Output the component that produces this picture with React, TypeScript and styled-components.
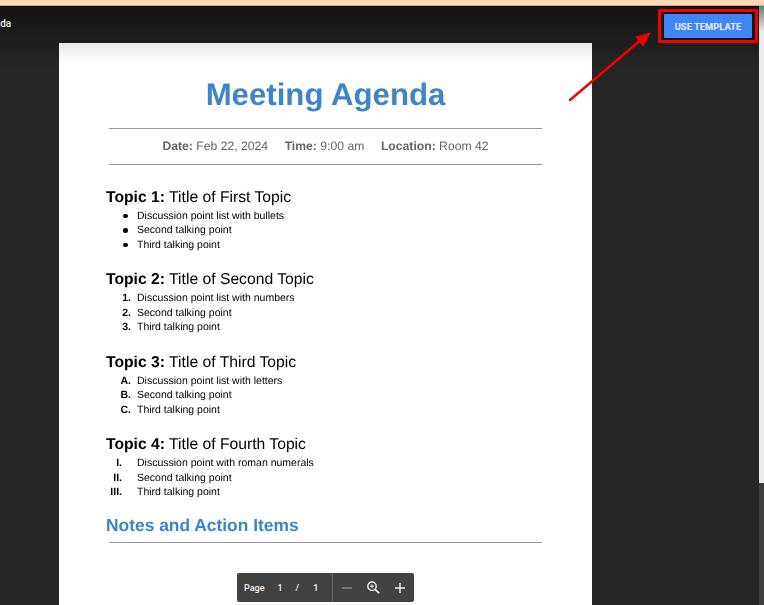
import React from "react";
import styled, { createGlobalStyle } from "styled-components";

const GlobalStyle = createGlobalStyle`
  html, body {
    margin: 0;
    padding: 0;
    height: 605px;
    overflow: hidden;
    background: #262626;
    font-family: "Liberation Sans", Arial, sans-serif;
  }
`;

const Screen = styled.div`
  position: relative;
  width: 764px;
  height: 605px;
  overflow: hidden;
  display: flex;
  flex-direction: column;
  background: #262626;
`;

const BrowserEdge = styled.div`
  height: 5px;
  flex: none;
  background: #fcd9b2;
  border-bottom: 1px solid #c9ad8e;
`;

const Body = styled.div`
  flex: 1;
  min-height: 0;
  display: flex;
`;

const Viewer = styled.main`
  position: relative;
  flex: 1;
  min-width: 0;
  overflow: hidden;
  background: linear-gradient(#111111 0, #1a1a1a 22px, #262626 62px);
`;

const Filename = styled.div`
  height: 37px;
  margin-left: -23px;
  padding-top: 12px;
  box-sizing: border-box;
  font-family: Roboto, "Liberation Sans", sans-serif;
  font-size: 10px;
  font-weight: 500;
  color: #e8e8e8;
`;

const Sheet = styled.article`
  position: relative;
  margin-left: 59px;
  width: 533px;
  height: 700px;
  box-sizing: border-box;
  padding: 32px 47px 0;
  background: linear-gradient(#e9e9e9 0, #ffffff 20px);
  color: #000;
  filter: blur(0.25px);
  text-rendering: geometricPrecision;
`;

const Title = styled.h1`
  margin: 0 -5px;
  height: 53px;
  font-size: 31.2px;
  line-height: 40px;
  font-weight: 700;
  text-align: center;
  color: #3d85c6;
`;

const Rule = styled.hr`
  margin: 0 3px;
  height: 1px;
  border: 0;
  background: #9a9a9a;
`;

const Meta = styled.div`
  height: 35px;
  box-sizing: border-box;
  padding-bottom: 1px;
  display: flex;
  align-items: center;
  justify-content: center;
  gap: 16.5px;
  font-size: 12.2px;
  color: #666666;
  b {
    font-weight: 700;
  }
`;

const Topic = styled.section`
  margin-top: 18px;
  &:first-of-type {
    margin-top: 22.6px;
  }
`;

const TopicTitle = styled.h2`
  margin: 0;
  height: 21px;
  font-size: 15.7px;
  line-height: 19px;
  font-weight: 400;
  b {
    font-weight: 700;
  }
`;

const List = styled.ul`
  margin: 0;
  padding: 0;
  list-style: none;
`;

const Item = styled.li`
  display: flex;
  height: 14.5px;
  font-size: 10.5px;
  line-height: 14.5px;
`;

const Marker = styled.span<{ $inset: number }>`
  width: 25px;
  flex: none;
  box-sizing: border-box;
  padding-right: ${(p) => p.$inset}px;
  text-align: right;
  font-weight: 700;
  white-space: nowrap;
`;

const Dot = styled.span`
  display: block;
  width: 4.5px;
  height: 4.5px;
  margin: 5px 0 0 17px;
  border-radius: 50%;
  background: #000;
`;

const ItemText = styled.span`
  margin-left: 6px;
`;

const Notes = styled.h2`
  margin: 14px 0 0;
  height: 28.4px;
  font-size: 17.4px;
  line-height: 22px;
  font-weight: 700;
  color: #3d85c6;
`;

const PageBar = styled.div`
  position: absolute;
  left: 237px;
  top: 573px;
  width: 177px;
  height: 29px;
  display: flex;
  align-items: center;
  background: #424242;
  border-radius: 2px;
  color: #f1f1f1;
`;

const PageInfo = styled.div`
  width: 96px;
  height: 100%;
  box-sizing: border-box;
  padding-left: 7px;
  display: flex;
  align-items: center;
  border-right: 1px solid #6a6a6a;
  font-family: Roboto, "Liberation Sans", sans-serif;
  font-size: 9px;
  font-weight: 500;
`;

const PageNumber = styled.span<{ $gap: number }>`
  margin-left: ${(p) => p.$gap}px;
`;

const Zoom = styled.div`
  flex: 1;
  display: flex;
  align-items: center;
  justify-content: space-between;
  padding: 0 6px;
`;

const TemplateFrame = styled.div`
  position: absolute;
  left: 658px;
  top: 9px;
  width: 100px;
  height: 34px;
  box-sizing: border-box;
  border: 3px solid #f00000;
  background: #141414;
  display: flex;
  align-items: center;
  justify-content: center;
`;

const TemplateButton = styled.button`
  all: unset;
  width: 88px;
  height: 24px;
  display: flex;
  align-items: center;
  justify-content: center;
  border-radius: 1px;
  background: #4285f4;
  color: #e8f0fe;
  font-family: Roboto, "Liberation Sans", sans-serif;
  font-size: 9.4px;
  font-weight: 700;
`;

const Arrow = styled.svg`
  position: absolute;
  left: 565px;
  top: 25px;
`;

const Scrollbar = styled.aside`
  width: 5px;
  flex: none;
  display: flex;
  flex-direction: column;
`;

const ScrollThumb = styled.div`
  height: 477px;
  background: linear-gradient(#777777 0, #ececec 26px);
`;

const ScrollTrack = styled.div`
  flex: 1;
  background: #3e3e3e;
`;

const topics = [
  {
    label: "Topic 1:",
    title: "Title of First Topic",
    markers: ["", "", ""],
    inset: 0,
    first: "Discussion point list with bullets",
  },
  {
    label: "Topic 2:",
    title: "Title of Second Topic",
    markers: ["1.", "2.", "3."],
    inset: 0,
    first: "Discussion point list with numbers",
  },
  {
    label: "Topic 3:",
    title: "Title of Third Topic",
    markers: ["A.", "B.", "C."],
    inset: 0,
    first: "Discussion point list with letters",
  },
  {
    label: "Topic 4:",
    title: "Title of Fourth Topic",
    markers: ["I.", "II.", "III."],
    inset: 9,
    first: "Discussion point with roman numerals",
  },
];

export default function App() {
  return (
    <Screen>
      <GlobalStyle />
      <BrowserEdge />
      <Body>
        <Viewer>
          <Filename>Agenda</Filename>
          <Sheet>
            <Title>Meeting Agenda</Title>
            <Rule />
            <Meta>
              <span>
                <b>Date:</b> Feb 22, 2024
              </span>
              <span>
                <b>Time:</b> 9:00 am
              </span>
              <span>
                <b>Location:</b> Room 42
              </span>
            </Meta>
            <Rule />
            {topics.map((t) => (
              <Topic key={t.label}>
                <TopicTitle>
                  <b>{t.label}</b> {t.title}
                </TopicTitle>
                <List>
                  {[t.first, "Second talking point", "Third talking point"].map((text, i) => (
                    <Item key={text}>
                      <Marker $inset={t.inset}>{t.markers[i] || <Dot />}</Marker>
                      <ItemText>{text}</ItemText>
                    </Item>
                  ))}
                </List>
              </Topic>
            ))}
            <Notes>Notes and Action Items</Notes>
            <Rule />
          </Sheet>
        </Viewer>
        <Scrollbar>
          <ScrollThumb />
          <ScrollTrack />
        </Scrollbar>
      </Body>
      <PageBar>
        <PageInfo>
          Page
          <PageNumber $gap={13}>1</PageNumber>
          <PageNumber $gap={13}>/</PageNumber>
          <PageNumber $gap={14}>1</PageNumber>
        </PageInfo>
        <Zoom>
          <svg width="16" height="16" viewBox="0 0 16 16" fill="none" stroke="#8e8e8e" strokeWidth="1.4">
            <path d="M3 8h10" />
          </svg>
          <svg width="16" height="16" viewBox="0 0 16 16" fill="none" stroke="#f1f1f1" strokeWidth="1.4">
            <circle cx="6" cy="6.2" r="4.2" />
            <path d="M9.2 9.4l4 4" strokeWidth="1.8" />
            <path d="M4 6.2h4M6 4.2v4" strokeWidth="1" />
          </svg>
          <svg width="16" height="16" viewBox="0 0 16 16" fill="none" stroke="#f1f1f1" strokeWidth="1.4">
            <path d="M3 8h10M8 3v10" />
          </svg>
        </Zoom>
      </PageBar>
      <TemplateFrame>
        <TemplateButton>USE TEMPLATE</TemplateButton>
      </TemplateFrame>
      <Arrow width="90" height="80" viewBox="0 0 90 80">
        <path d="M5 75L77 14" stroke="#f00000" strokeWidth="2.4" strokeLinecap="round" />
        <path d="M85 8L71 12L78 21Z" fill="#f00000" stroke="#f00000" />
      </Arrow>
    </Screen>
  );
}
